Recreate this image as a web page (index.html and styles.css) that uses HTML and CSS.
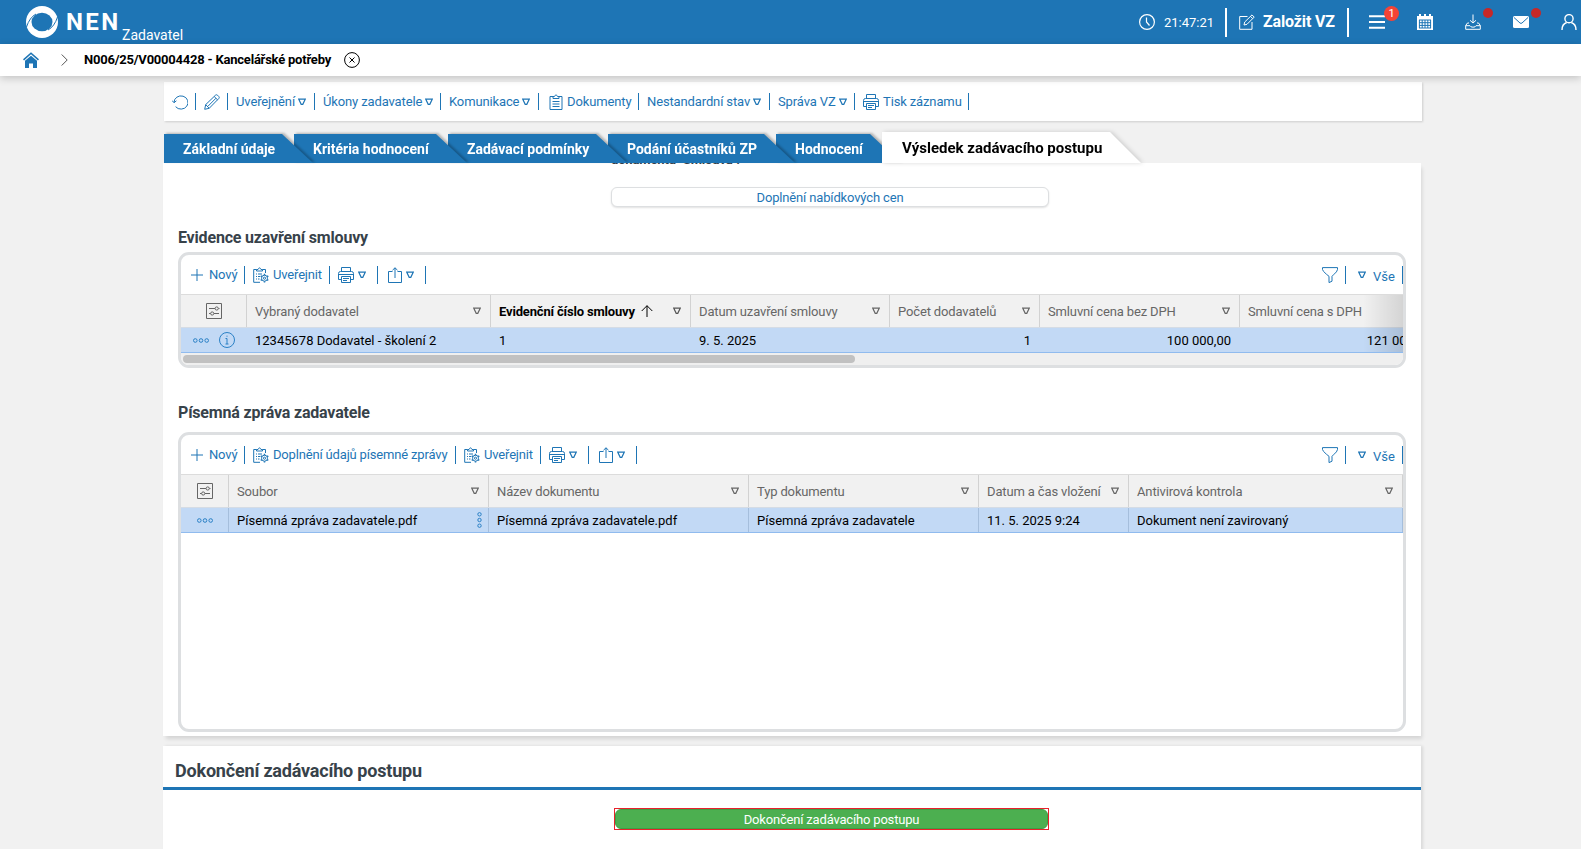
FILE: index.html
```
<!DOCTYPE html>
<html lang="cs">
<head>
    <meta charset="UTF-8">
    <meta name="viewport" content="width=device-width, initial-scale=1.0">
    <title>NEN - Kancelářské potřeby</title>
    <link rel="stylesheet" href="styles.css">
</head>
<body>
    <!-- icons -->
    <svg class="sprite">
        <symbol id="tri" viewBox="0 0 8 8"><path d="M.8 1.200h6.400L4.800 6.300H3.200z"/></symbol>
        <symbol id="refresh" viewBox="0 0 16 16"><path d="M2 8.500a7 6.600 0 1 1 1.600 4.200M0 6.500l2 2.200 2.400-1.900"/></symbol>
        <symbol id="pencil" viewBox="0 0 16 16"><path d="M.7 15.300l1-4.700L11.500 1.200q1-.9 2 0l1.300 1.300q.9 1 0 2L5.200 14.300zM1.700 10.600l3.500 3.700M10.200 2.500l3.400 3.400M12 4.200L4 12.200"/></symbol>
        <symbol id="clip" viewBox="0 0 14 16"><path d="M4 2.500H1v13h12v-13h-3M4 4.500V2.500h1.500Q7-.8 8.500 2.500H10v2zM3.500 7.500h7M3.500 10h7M3.500 12.500h7"/></symbol>
        <symbol id="clipgear" viewBox="0 0 16 16"><path d="M3.500 2.500H.7v12.800H7M9.500 2.500h3V6M3.500 4V2.500h1.500Q6.500-.8 8 2.500h1.500V4zM3 7h1M5 7h4M3 9.500h1M5 9.500h2M3 12h1M5 12h1.500"/><circle cx="11.500" cy="11.200" r="3"/><circle cx="11.500" cy="11.200" r="1.100"/><path d="M11.500 6.800v1.400M11.500 14.200v1.400M7.700 9l1.200.7M14.100 12.700l1.200.7M7.700 13.400l1.200-.7M14.100 9.700l1.200-.7" stroke-width="1.500"/></symbol>
        <symbol id="print" viewBox="0 0 16 16"><path d="M3.500 4.500v-4h9v4M3.500 12.500h-3v-6q0-2 2-2h11q2 0 2 2v6h-3M3.500 9.500h9v6h-9zM5 11.500h6M5 13.500h4M1 7.500h14"/></symbol>
        <symbol id="share" viewBox="0 0 14 16"><path d="M4.500 4.500h-4v11h13v-11h-4M7 11V.8M4.500 3.200L7 .8l2.500 2.400"/></symbol>
        <symbol id="plus" viewBox="0 0 12 12"><path d="M6 0v12M0 6h12"/></symbol>
        <symbol id="funnel" viewBox="0 0 16 16"><path d="M.5.600h15v2q-.2 2-4 5.200l-1.500 1.500v4.900l-3 1.400V9.300L4.500 7.300Q.6 4 .5 2.500z"/></symbol>
        <symbol id="config" viewBox="0 0 16 16"><path d="M.5.500h15v15H.5zM3 5.500h6M12.500 5.500h1M3 10.500h1.500M8 10.500h5"/><circle cx="10.700" cy="5.500" r="1.600"/><circle cx="6.200" cy="10.500" r="1.600"/></symbol>
        <symbol id="dots" viewBox="0 0 16 5"><circle cx="2.300" cy="2.500" r="1.800"/><circle cx="8" cy="2.500" r="1.800"/><circle cx="13.700" cy="2.500" r="1.800"/></symbol>
        <symbol id="vdots" viewBox="0 0 5 16"><circle cx="2.500" cy="2.300" r="1.700"/><circle cx="2.500" cy="8" r="1.700"/><circle cx="2.500" cy="13.700" r="1.700"/></symbol>
        <symbol id="info" viewBox="0 0 16 16"><circle cx="8" cy="8" r="7.500"/><path d="M6.500 6.500H8V12M6.500 12h3M7.500 4.200h1"/></symbol>
    </svg>

    <header class="topbar">
        <svg class="logo" viewBox="0 0 32 32">
            <circle class="solid" cx="16" cy="16" r="16"/>
            <ellipse class="hole" cx="16" cy="16" rx="10.500" ry="9.300"/>
            <path class="cells" d="M10 8Q3.500 11.500 .5 21M22 24Q28.500 20.500 31.500 11"/>
        </svg>
        <span class="brand">NEN</span>
        <span class="role">Zadavatel</span>
        <div class="topbar-right">
            <svg class="icon" viewBox="0 0 16 16"><circle cx="8" cy="8" r="7.400"/><path d="M7.500 3.500V8l3 3.500"/></svg>
            <span class="time">21:47:21</span>
            <a class="create">
                <svg class="icon" viewBox="0 0 16 16"><path d="M8.500 2.500H.700v12.800H13V8M5 11l.7-3L13 .9l2.200 2.200L8 10.300zM11.500 2.400l2.200 2.200"/></svg>
                <span>Založit VZ</span>
            </a>
            <div class="top-item"><svg class="icon menu-icon" viewBox="0 0 16 16"><path d="M0 2.200h16M0 8h16M0 13.800h16"/></svg><span class="badge">1</span></div>
            <div class="top-item"><svg class="icon" viewBox="0 0 16 16"><path class="solid" d="M0 2h2V0h2v2h3V0h2v2h3V0h2v2h2v14H0z"/><path class="cells" d="M2 6h12M2 8.700h12M2 11.400h12M2 14h12M2.400 6v8M5.200 6v8M8 6v8M10.800 6v8M13.600 6v8"/></svg></div>
            <div class="top-item"><svg class="icon" viewBox="0 0 16 16"><path d="M8 .5V9M5 6.300L8 9l3-2.700M4 9H2.500L.700 11.500v3.800h14.600v-3.800L13.500 9H12M.700 11.700H5q.5 1.500 3 1.500t3-1.500h4.300"/></svg><span class="dot"></span></div>
            <div class="top-item"><svg class="icon" viewBox="0 0 16 16"><path class="solid" d="M1.500 2h13q1.500 0 1.500 1.500v9q0 1.500-1.500 1.500h-13Q0 14 0 12.500v-9Q0 2 1.500 2z"/><path class="cells" d="M1 3.500l6 5.500q1 .8 2 0l6-5.500"/></svg><span class="dot"></span></div>
            <div class="top-item"><svg class="icon user-icon" viewBox="0 0 16 16"><circle cx="8" cy="4.700" r="4.100"/><path d="M1 16q0-6 4.700-7.500M15 16q0-6-4.700-7.500"/></svg></div>
        </div>
    </header>

    <nav class="breadcrumb">
        <svg class="home" viewBox="0 0 16 16"><path d="M8 3.800l6 5V16h-4v-4.500H6V16H2V8.800z"/><path class="roof" d="M.5 7.800L8 1.200l7.500 6.600"/></svg>
        <svg class="chevron" viewBox="0 0 7 12"><path d="M.7.500L6.200 6 .7 11.500"/></svg>
        <span class="crumb">N006/25/V00004428 - Kancelářské potřeby</span>
        <svg class="close" viewBox="0 0 16 16"><circle cx="8" cy="8" r="7.400"/><path d="M5.500 5.500l5 5M10.500 5.500l-5 5"/></svg>
    </nav>

    <main>
        <div class="record-bar">
            <a class="w-refresh"><svg class="icon"><use href="#refresh"/></svg></a>
            <a class="w-pencil"><svg class="icon"><use href="#pencil"/></svg></a>
            <a class="w-publish">Uveřejnění<svg class="tri"><use href="#tri"/></svg></a>
            <a class="w-tasks">Úkony zadavatele<svg class="tri"><use href="#tri"/></svg></a>
            <a class="w-comm">Komunikace<svg class="tri"><use href="#tri"/></svg></a>
            <a class="w-docs"><svg class="icon narrow"><use href="#clip"/></svg>Dokumenty</a>
            <a class="w-state">Nestandardní stav<svg class="tri"><use href="#tri"/></svg></a>
            <a class="w-manage">Správa VZ<svg class="tri"><use href="#tri"/></svg></a>
            <a class="w-print"><svg class="icon"><use href="#print"/></svg>Tisk záznamu</a>
        </div>

        <div class="tabs">
            <a class="tab t1"><span>Základní údaje</span></a>
            <a class="tab t2"><span>Kritéria hodnocení</span></a>
            <a class="tab t3"><span>Zadávací podmínky</span></a>
            <a class="tab t4"><span>Podání účastníků ZP</span></a>
            <a class="tab t5"><span>Hodnocení</span></a>
            <a class="tab active"><span>Výsledek zadávacího postupu</span></a>
        </div>

        <section class="panel">
            <div class="scrolled-label"><span>dokumentů "Smlouva".</span></div>
            <button class="btn">Doplnění nabídkových cen</button>

            <h2>Evidence uzavření smlouvy</h2>
            <div class="grid contracts">
                <div class="grid-bar">
                    <a class="g-new"><svg class="plus"><use href="#plus"/></svg>Nový</a>
                    <a class="g-pub"><svg class="icon"><use href="#clipgear"/></svg>Uveřejnit</a>
                    <a class="g-print"><svg class="icon"><use href="#print"/></svg><svg class="tri"><use href="#tri"/></svg></a>
                    <a class="g-share"><svg class="icon narrow"><use href="#share"/></svg><svg class="tri"><use href="#tri"/></svg></a>
                    <a class="g-filter"><svg class="icon"><use href="#funnel"/></svg></a>
                    <a class="g-all"><svg class="tri"><use href="#tri"/></svg><span>Vše</span></a>
                </div>
                <div class="row head">
                    <div class="tools"><svg class="icon"><use href="#config"/></svg></div>
                    <div>Vybraný dodavatel<svg class="tri"><use href="#tri"/></svg></div>
                    <div class="sorted"><span>Evidenční číslo smlouvy</span><svg class="arrow" viewBox="0 0 12 12"><path d="M6 12V.7M.7 6L6 .7 11.300 6"/></svg><svg class="tri"><use href="#tri"/></svg></div>
                    <div>Datum uzavření smlouvy<svg class="tri"><use href="#tri"/></svg></div>
                    <div>Počet dodavatelů<svg class="tri"><use href="#tri"/></svg></div>
                    <div>Smluvní cena bez DPH<svg class="tri"><use href="#tri"/></svg></div>
                    <div>Smluvní cena s DPH</div>
                </div>
                <div class="row data">
                    <div class="tools"><svg class="dots"><use href="#dots"/></svg><svg class="icon"><use href="#info"/></svg></div>
                    <div>12345678 Dodavatel - školení 2</div>
                    <div>1</div>
                    <div>9. 5. 2025</div>
                    <div class="num">1</div>
                    <div class="num">100 000,00</div>
                    <div class="num">121 000,00</div>
                </div>
                <div class="scrollbar"><div class="thumb"></div></div>
                <div class="fade"></div>
            </div>

            <h2>Písemná zpráva zadavatele</h2>
            <div class="grid reports">
                <div class="grid-bar">
                    <a class="g-new"><svg class="plus"><use href="#plus"/></svg>Nový</a>
                    <a class="g-fill"><svg class="icon"><use href="#clipgear"/></svg>Doplnění údajů písemné zprávy</a>
                    <a class="g-pub"><svg class="icon"><use href="#clipgear"/></svg>Uveřejnit</a>
                    <a class="g-print"><svg class="icon"><use href="#print"/></svg><svg class="tri"><use href="#tri"/></svg></a>
                    <a class="g-share"><svg class="icon narrow"><use href="#share"/></svg><svg class="tri"><use href="#tri"/></svg></a>
                    <a class="g-filter"><svg class="icon"><use href="#funnel"/></svg></a>
                    <a class="g-all"><svg class="tri"><use href="#tri"/></svg><span>Vše</span></a>
                </div>
                <div class="row head">
                    <div class="tools"><svg class="icon"><use href="#config"/></svg></div>
                    <div>Soubor<svg class="tri"><use href="#tri"/></svg></div>
                    <div>Název dokumentu<svg class="tri"><use href="#tri"/></svg></div>
                    <div>Typ dokumentu<svg class="tri"><use href="#tri"/></svg></div>
                    <div>Datum a čas vložení<svg class="tri"><use href="#tri"/></svg></div>
                    <div>Antivirová kontrola<svg class="tri"><use href="#tri"/></svg></div>
                </div>
                <div class="row data">
                    <div class="tools"><svg class="dots"><use href="#dots"/></svg></div>
                    <div>Písemná zpráva zadavatele.pdf<svg class="vdots"><use href="#vdots"/></svg></div>
                    <div>Písemná zpráva zadavatele.pdf</div>
                    <div>Písemná zpráva zadavatele</div>
                    <div>11. 5. 2025 9:24</div>
                    <div>Dokument není zavirovaný</div>
                </div>
            </div>
        </section>

        <section class="finish">
            <h3>Dokončení zadávacího postupu</h3>
            <div class="highlight"><button class="btn-green">Dokončení zadávacího postupu</button></div>
        </section>
    </main>
</body>
</html>
```
FILE: styles.css
```
* {
    box-sizing: border-box;
}
body {
    margin: 0;
    height: 849px;
    overflow: hidden;
    background: #f1f1f1;
    font-family: Roboto, sans-serif;
    font-size: 13px;
    color: #000;
}
svg {
    display: block;
    flex: none;
    fill: none;
    stroke: currentColor;
    stroke-width: 1;
}
.sprite {
    position: absolute;
    width: 0;
    height: 0;
}
.icon {
    width: 16px;
    height: 16px;
}
.icon.narrow {
    width: 14px;
}
.tri {
    width: 8px;
    height: 8px;
    stroke-width: 1.2;
}
.solid {
    fill: #fff;
    stroke: none;
}

/* top bar */
.topbar {
    display: flex;
    height: 44px;
    padding-left: 26px;
    background: #1e75b5;
    color: #fff;
}
.logo {
    width: 32px;
    height: 32px;
    margin-top: 6px;
}
.hole {
    fill: #1e75b5;
    stroke: none;
}
.brand {
    margin: 8px 0 0 8px;
    width: 57px;
    font-size: 24px;
    font-weight: 700;
    line-height: 28px;
    letter-spacing: 2.4px;
}
.role {
    margin: 27px 0 0 -1px;
    font-size: 14px;
    line-height: 16px;
}
.topbar-right {
    display: flex;
    align-items: center;
    height: 44px;
    margin-left: auto;
    padding-right: 4px;
}
.topbar-right > .icon {
    stroke-width: 1.2;
}
.time {
    width: 61px;
    margin-left: 9px;
}
.create {
    display: flex;
    align-items: center;
    gap: 8px;
    width: 124px;
    height: 29px;
    padding-left: 12px;
    border-left: 2px solid #fff;
    border-right: 2px solid #fff;
    font-size: 16px;
    font-weight: 700;
    letter-spacing: -0.15px;
    white-space: nowrap;
    margin-right: 20px;
}
.create span {
    padding-bottom: 2px;
}
.top-item {
    position: relative;
    margin-right: 32px;
}
.top-item:last-child {
    margin-right: 0;
}
.menu-icon {
    stroke-width: 2;
}
.user-icon {
    stroke-width: 1.4;
}
.cells {
    stroke: #1e75b5;
}
.badge {
    position: absolute;
    left: 15px;
    top: -8px;
    width: 15px;
    height: 15px;
    border-radius: 50%;
    background: #f44336;
    font-size: 11px;
    line-height: 15px;
    text-align: center;
}
.dot {
    position: absolute;
    left: 18px;
    top: -6px;
    width: 10px;
    height: 10px;
    border-radius: 50%;
    background: #c62828;
}

/* breadcrumb */
.breadcrumb {
    position: relative;
    display: flex;
    align-items: center;
    height: 32px;
    padding-left: 23px;
    background: #fff;
    box-shadow: 0 2px 8px rgba(0, 0, 0, 0.2);
}
.home {
    width: 16px;
    height: 16px;
    fill: #1e75b5;
    stroke: none;
}
.roof {
    fill: none;
    stroke: #1e75b5;
    stroke-width: 1.6;
}
.chevron {
    width: 7px;
    height: 12px;
    margin: 0 16px 0 22px;
    color: #555;
}
.crumb {
    width: 260px;
    padding-bottom: 1px;
    font-weight: 700;
    letter-spacing: -0.22px;
    white-space: nowrap;
}
.close {
    width: 16px;
    height: 16px;
}

/* record toolbar */
main {
    width: 1258px;
    margin: 6px 0 0 163px;
}
.record-bar {
    display: flex;
    align-items: center;
    width: 1258px;
    height: 39px;
    margin-left: 1px;
    background: #fff;
    color: #1e75b5;
    letter-spacing: -0.13px;
    box-shadow: 1px 1px 2px rgba(0, 0, 0, 0.15);
}
.record-bar a {
    display: flex;
    align-items: center;
    height: 17px;
    padding-left: 8px;
    border-right: 1px solid #1e75b5;
    white-space: nowrap;
}
.record-bar .tri {
    margin-left: 3px;
}
.record-bar .icon {
    margin-right: 4px;
}
.w-refresh { width: 32px; }
.w-pencil { width: 32px; }
.w-publish { width: 87px; }
.w-tasks { width: 126px; }
.w-comm { width: 98px; }
.record-bar .w-docs { width: 100px; padding-left: 10px; }
.w-state { width: 131px; }
.w-manage { width: 85px; }
.w-print { width: 114px; }

/* tabs */
.tabs {
    display: flex;
    align-items: flex-end;
    height: 42px;
    padding-left: 1px;
}
.tab {
    position: relative;
    height: 29px;
    padding-left: 19px;
    color: #fff;
    font-size: 14px;
    font-weight: 700;
    line-height: 31px;
    white-space: nowrap;
    filter: drop-shadow(2px -1px 1px rgba(0, 0, 0, 0.25));
}
.tab span {
    position: relative;
}
.tab::before {
    content: "";
    position: absolute;
    left: 0;
    top: 0;
    bottom: 0;
    right: -19px;
    background: #1e75b5;
    clip-path: polygon(0 0, calc(100% - 31px) 0, 100% 100%, 0 100%);
}
.t1 { width: 130px; z-index: 5; }
.t2 { width: 154px; z-index: 4; }
.t3 { width: 160px; z-index: 3; }
.t4 { width: 168px; z-index: 2; }
.t5 { width: 106px; z-index: 1; }
.tab.active {
    width: 240px;
    height: 31px;
    z-index: 6;
    padding-left: 20px;
    color: #000;
    font-size: 15px;
    line-height: 32px;
    filter: drop-shadow(2px 0 2px rgba(0, 0, 0, 0.15));
}
.tab.active::before {
    background: #fff;
}

/* main panel */
.panel {
    height: 573px;
    padding: 0 15px;
    background: #fff;
    box-shadow: 2px 4px 4px -1px rgba(0, 0, 0, 0.12);
}
/* label scrolled under the tabs, only its baseline shows */
.scrolled-label {
    display: flex;
    align-items: flex-end;
    height: 3px;
    margin-left: 433px;
    color: #37424a;
    font-weight: 700;
    line-height: 15px;
    letter-spacing: -0.15px;
}
.scrolled-label span {
    margin-bottom: -1px;
}
.btn {
    display: block;
    width: 438px;
    height: 20px;
    margin: 21px 0 0 433px;
    padding: 0;
    border: 1px solid #dddfe1;
    border-radius: 6px;
    background: #fff;
    box-shadow: 0 1px 2px rgba(0, 0, 0, 0.12);
    color: #1e75b5;
    font: 13px Roboto, sans-serif;
    letter-spacing: -0.15px;
}
h2 {
    height: 45px;
    margin: 0;
    padding-top: 21px;
    color: #37424a;
    font-size: 16px;
    font-weight: 700;
    line-height: 20px;
    letter-spacing: -0.18px;
}
.grid {
    position: relative;
    width: 1228px;
    border: 3px solid #dddfe1;
    border-radius: 11px;
    overflow: hidden;
}
.contracts {
    height: 116px;
    margin-bottom: 14px;
}
.reports {
    height: 300px;
    margin-top: 5px;
}
.grid-bar {
    display: flex;
    align-items: center;
    height: 39px;
    color: #1e75b5;
    letter-spacing: -0.17px;
}
.grid-bar a {
    display: flex;
    align-items: center;
    height: 18px;
    padding-left: 8px;
    border-right: 1px solid #1e75b5;
    white-space: nowrap;
}
.grid-bar .plus {
    width: 12px;
    height: 12px;
    margin-right: 6px;
}
.grid-bar .icon {
    margin-right: 4px;
}
.grid-bar .g-new { width: 64px; padding-left: 10px; }
.g-pub { width: 85px; }
.g-fill { width: 211px; }
.g-print { width: 48px; }
.grid-bar .g-share { width: 48px; padding-left: 10px; }
.grid-bar .g-filter {
    width: 32px;
    margin-left: auto;
}
.grid-bar .g-all {
    width: 57px;
    padding-left: 12px;
}
.g-all span {
    padding-top: 3px;
    margin-left: 7px;
    letter-spacing: 0;
}
.row {
    display: grid;
    width: 1260px;
}
.contracts .row {
    grid-template-columns: 66px 244px 200px 199px 150px 200px 200px;
}
.reports .row {
    width: 1222px;
    grid-template-columns: 48px 260px 260px 230px 150px 274px;
}
.row > div {
    display: flex;
    align-items: center;
    padding: 0 8px;
    border-right: 1px solid transparent;
    white-space: nowrap;
}
.head {
    height: 33px;
    border-top: 1px solid #dcdcdc;
    background: #f1f1f1;
    color: #666;
    letter-spacing: -0.14px;
}
.head > div {
    border-right-color: #d2d2d2 !important;
}
.head .tri {
    margin-left: auto;
    margin-right: 1px;
}
.head .sorted {
    color: #000;
    font-weight: 700;
    letter-spacing: -0.17px;
}
.arrow {
    width: 12px;
    height: 12px;
    margin-left: 6px;
}
.sorted .tri {
    color: #555;
}
.data {
    height: 26px;
    border-top: 1px solid #d5dce5;
    border-bottom: 1px solid #90bbee;
    background: #c2d9f5;
}
.reports .data > div {
    border-right-color: #a5bedc;
}
.row .tools {
    justify-content: center;
    padding: 0;
}
.data .tools {
    gap: 10px;
    color: #2b80c5;
}
.data .num {
    justify-content: flex-end;
}
.dots {
    width: 16px;
    height: 5px;
}
.vdots {
    width: 5px;
    height: 16px;
    margin: 0 -2px 0 auto;
    color: #2b80c5;
}
.scrollbar {
    height: 12px;
    padding: 2px;
    background: #efefef;
}
.thumb {
    width: 672px;
    height: 8px;
    border-radius: 4px;
    background: #c1c1c1;
}
.fade {
    position: absolute;
    right: 0;
    top: 40px;
    width: 40px;
    height: 57px;
    background: linear-gradient(to right, transparent, rgba(0, 0, 0, 0.12));
}

/* final section */
.finish {
    height: 120px;
    margin-top: 10px;
    background: #fff;
    box-shadow: 2px 0 3px rgba(0, 0, 0, 0.1);
}
h3 {
    height: 44px;
    margin: 0;
    padding: 3px 0 0 12px;
    border-bottom: 3px solid #1e75b5;
    color: #37424a;
    font-size: 18px;
    font-weight: 700;
    line-height: 44px;
    letter-spacing: -0.19px;
}
.highlight {
    width: 435px;
    height: 22px;
    margin: 18px 0 0 451px;
    border: 1px solid #e8222b;
}
.btn-green {
    display: block;
    width: 433px;
    height: 20px;
    padding: 0;
    border: 1px solid #3f9d44;
    border-radius: 6px;
    background: #4caf50;
    color: #fff;
    font: 13px Roboto, sans-serif;
    letter-spacing: -0.18px;
}
```
